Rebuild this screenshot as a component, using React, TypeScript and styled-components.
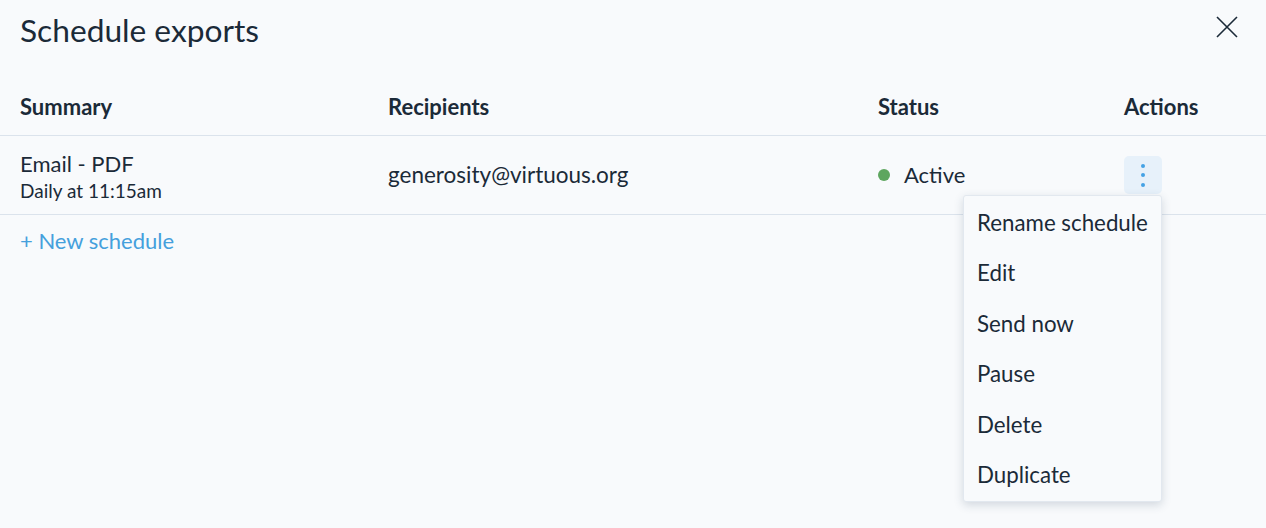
import React from 'react';
import styled, { createGlobalStyle } from 'styled-components';

const GlobalStyle = createGlobalStyle`
  html, body {
    margin: 0;
    padding: 0;
    background: #f8fafc;
  }
  body {
    font-family: Lato, "Open Sans", sans-serif;
    color: #1b2a38;
  }
`;

const Page = styled.div`
  width: 1266px;
  height: 528px;
  background: #f8fafc;
  position: relative;
  overflow: hidden;
`;

const TitleBar = styled.div`
  display: flex;
  align-items: center;
  justify-content: space-between;
  padding: 11px 26px 0 20px;
  height: 39px;
`;

const Title = styled.h1`
  margin: 0;
  font-size: 31.7px;
  font-weight: 400;
  line-height: 39px;
`;

const CloseButton = styled.button`
  border: none;
  background: none;
  padding: 0;
  width: 26px;
  height: 26px;
  display: flex;
  align-items: center;
  justify-content: center;
  cursor: pointer;
  color: #1b2a38;
  margin-top: -8px;
`;

const Row = styled.div<{ $head?: boolean }>`
  display: grid;
  grid-template-columns: 368px 490px 246px 1fr;
  padding-left: 20px;
  align-items: center;
  height: ${(p) => (p.$head ? '55px' : '78px')};
  border-bottom: 1px solid #dbe3ec;
  margin-top: ${(p) => (p.$head ? '30px' : '0')};
`;

const HeadCell = styled.div`
  font-size: 22px;
  font-weight: 700;
  line-height: 26px;
  margin-top: -2px;
`;

const Cell = styled.div`
  font-size: 22.5px;
  line-height: 26px;
  position: relative;
`;

const Summary = styled.div`
  display: flex;
  flex-direction: column;
  padding-top: 4px;
`;

const SummaryTitle = styled.span`
  font-size: 22px;
  line-height: 27px;
`;

const SummarySub = styled.span`
  font-size: 19px;
  line-height: 27px;
`;

const Status = styled.div`
  display: flex;
  align-items: center;
  gap: 14px;
  font-size: 22px;
  line-height: 26px;
`;

const Dot = styled.span`
  width: 12px;
  height: 12px;
  border-radius: 50%;
  background: #5ea65f;
`;

const Kebab = styled.button`
  width: 38px;
  height: 38px;
  border: none;
  border-radius: 5px;
  background: #e7f1fa;
  display: flex;
  flex-direction: column;
  align-items: center;
  justify-content: center;
  gap: 5.5px;
  padding: 0;
  cursor: pointer;
`;

const KebabDot = styled.span`
  width: 4px;
  height: 4px;
  border-radius: 50%;
  background: #45a2e4;
`;

const Menu = styled.ul`
  position: absolute;
  top: 39px;
  left: -161px;
  width: 199px;
  margin: 0;
  padding: 2px 0 1px;
  list-style: none;
  background: #f8fafc;
  border: 1px solid #e2e8ef;
  border-radius: 3px;
  box-shadow: 0 3px 10px rgba(40, 60, 90, 0.18);
  box-sizing: border-box;
  z-index: 5;
`;

const MenuItem = styled.li`
  padding: 0 13px;
  height: 50.4px;
  line-height: 50px;
  font-size: 22.3px;
  white-space: nowrap;
  cursor: pointer;
`;

const NewLink = styled.a`
  display: inline-block;
  margin: 13px 0 0 20px;
  font-size: 22px;
  line-height: 26px;
  color: #45a0dc;
  text-decoration: none;
  cursor: pointer;
`;

const menuItems = ['Rename schedule', 'Edit', 'Send now', 'Pause', 'Delete', 'Duplicate'];

const App: React.FC = () => {
  return (
    <Page>
      <GlobalStyle />
      <TitleBar>
        <Title>Schedule exports</Title>
        <CloseButton aria-label="Close">
          <svg width="24" height="24" viewBox="0 0 24 24">
            <path d="M2 2 L22 22 M22 2 L2 22" stroke="#1b2a38" strokeWidth="1.6" fill="none" />
          </svg>
        </CloseButton>
      </TitleBar>

      <Row $head>
        <HeadCell>Summary</HeadCell>
        <HeadCell>Recipients</HeadCell>
        <HeadCell>Status</HeadCell>
        <HeadCell>Actions</HeadCell>
      </Row>

      <Row>
        <Summary>
          <SummaryTitle>Email - PDF</SummaryTitle>
          <SummarySub>Daily at 11:15am</SummarySub>
        </Summary>
        <Cell>generosity@virtuous.org</Cell>
        <Status>
          <Dot />
          Active
        </Status>
        <Cell>
          <Kebab aria-label="Actions">
            <KebabDot />
            <KebabDot />
            <KebabDot />
          </Kebab>
          <Menu>
            {menuItems.map((item) => (
              <MenuItem key={item}>{item}</MenuItem>
            ))}
          </Menu>
        </Cell>
      </Row>

      <NewLink>+ New schedule</NewLink>
    </Page>
  );
};

export default App;
